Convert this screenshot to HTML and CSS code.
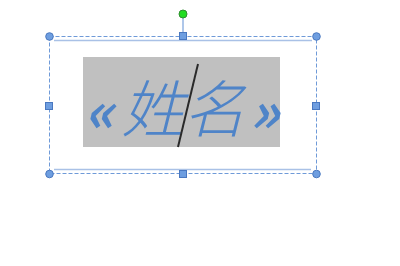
FILE: index.html
```html
<!DOCTYPE html>
<html lang="zh">
<head>
<meta charset="UTF-8">
<title>姓名</title>
<link rel="stylesheet" href="styles.css">
</head>
<body>
    <div class="stage">
        <div class="field">
            <span class="quote">«</span><span class="name">姓名</span><span class="quote">»</span>
        </div>

        <!-- selection frame and handles over the field -->
        <svg class="selection" width="400" height="266" viewBox="0 0 400 266">
            <line x1="54" y1="40.5" x2="312" y2="40.5" stroke="#a9c1e6" stroke-width="1.5"/>
            <line x1="54" y1="169.5" x2="311" y2="169.5" stroke="#a9c1e6" stroke-width="1.5"/>
            <rect x="49.5" y="36.5" width="267" height="137" fill="none" stroke="#6f9ad8" stroke-width="1" stroke-dasharray="4 2"/>
            <line x1="198" y1="64" x2="178" y2="147" stroke="#2a2a2a" stroke-width="2"/>
            <line x1="183" y1="15" x2="183" y2="36" stroke="#5f8fd4" stroke-width="1"/>
            <circle cx="183" cy="14" r="4" fill="#22dd22" stroke="#2f8f2f" stroke-width="1"/>
            <g fill="#6e9ee0" stroke="#4a78c0" stroke-width="1">
                <circle cx="49.5" cy="36.5" r="3.8"/>
                <circle cx="316.5" cy="36.5" r="3.8"/>
                <circle cx="49.5" cy="174" r="3.8"/>
                <circle cx="316.5" cy="174" r="3.8"/>
                <rect x="179.5" y="32.5" width="7" height="7"/>
                <rect x="179.5" y="170.5" width="7" height="7"/>
                <rect x="45.5" y="102.5" width="7" height="7"/>
                <rect x="312.5" y="102.5" width="7" height="7"/>
            </g>
        </svg>
    </div>
</body>
</html>
```

FILE: styles.css
```css
body {
    margin: 0;
    background-color: #fff;
    font-family: "Noto Sans CJK SC", "Noto Sans", sans-serif;
}

.stage {
    position: relative;
    width: 400px;
    height: 266px;
    padding-top: 57px;
    padding-left: 83px;
    box-sizing: border-box;
}

.field {
    width: 197px;
    height: 90px;
    box-sizing: border-box;
    padding: 6px 1px 0 1px;
    background-color: #c0c0c0;
    display: flex;
    align-items: center;
    justify-content: space-between;
    color: #4f84c8;
    line-height: 1;
    white-space: nowrap;
}

.quote {
    font-size: 56px;
    font-weight: 700;
    font-style: italic;
    margin-top: 6px;
}

.name {
    font-size: 62px;
    font-style: italic;
    font-weight: 300;
    margin-left: 4px;
}

.selection {
    position: absolute;
    left: 0;
    top: 0;
}
```
